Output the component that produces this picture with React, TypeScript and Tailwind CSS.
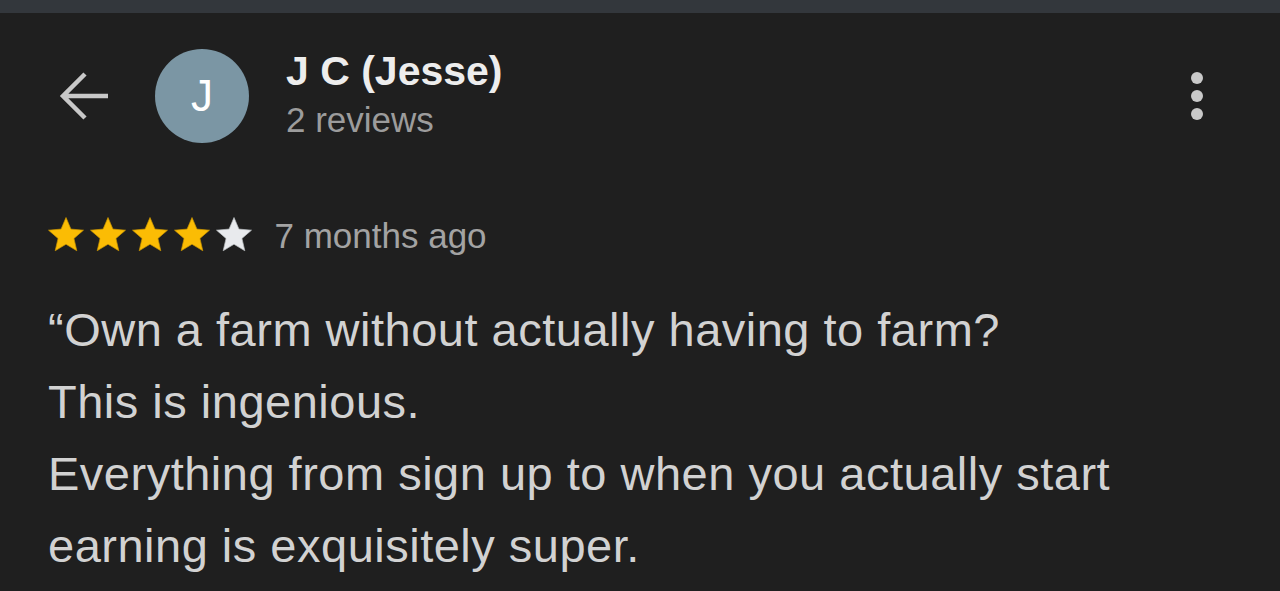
import React from 'react'

const STAR = 'M12 17.27L18.18 21l-1.64-7.03L22 9.24l-7.19-.61L12 2 9.19 8.63 2 9.24l5.46 4.73L5.82 21z'

function Star({ filled }: { filled: boolean }) {
  return (
    <svg width="42" height="42" viewBox="0 0 24 24" className="shrink-0">
      <path
        d={STAR}
        fill={filled ? '#fbbc04' : '#e8eaed'}
        stroke={filled ? '#c99400' : '#b8bbbf'}
        strokeWidth="0.4"
        strokeLinejoin="round"
      />
    </svg>
  )
}

export default function App() {
  const rating = 4
  const lines = [
    '\u201COwn a farm without actually having to farm?',
    'This is ingenious.',
    'Everything from sign up to when you actually start',
    'earning is exquisitely super.',
  ]

  return (
    <div
      className="w-[1280px] h-[591px] overflow-hidden bg-[#1f1f1f]"
      style={{ fontFamily: '"Liberation Sans", Arial, sans-serif' }}
    >
      <div className="h-[13px] bg-[#33373c]" />

      {/* header */}
      <div className="flex items-center pl-[58px] pr-[77px] pt-[36px]">
        <svg width="52" height="52" viewBox="0 0 52 52" className="shrink-0">
          <path
            d="M50 26H5M27 4L5 26l22 22"
            fill="none"
            stroke="#c8c8c8"
            strokeWidth="4.5"
            strokeLinecap="butt"
            strokeLinejoin="miter"
          />
        </svg>
        <div className="ml-[45px] w-[94px] h-[94px] rounded-full bg-[#7b96a4] flex items-center justify-center shrink-0">
          <span className="text-[44px] leading-none text-white">J</span>
        </div>
        <div className="ml-[37px] self-start mt-[2px] flex flex-col">
          <div className="text-[41px] leading-[41px] font-bold text-[#ededed]">J C (Jesse)</div>
          <div className="mt-[10px] text-[35px] leading-[35px] text-[#9c9c9c]">2 reviews</div>
        </div>
        <div className="ml-auto flex flex-col items-center gap-[6px]">
          <span className="w-[12px] h-[12px] rounded-full bg-[#c9c9c9]" />
          <span className="w-[12px] h-[12px] rounded-full bg-[#c9c9c9]" />
          <span className="w-[12px] h-[12px] rounded-full bg-[#c9c9c9]" />
        </div>
      </div>

      {/* rating row */}
      <div className="flex items-center pl-[44.5px] mt-[71px]">
        <div className="flex">
          {[1, 2, 3, 4, 5].map((i) => (
            <Star key={i} filled={i <= rating} />
          ))}
        </div>
        <span className="ml-[20px] text-[35px] leading-none text-[#a3a3a3]">7 months ago</span>
      </div>

      {/* review body */}
      <div className="pl-[48px] mt-[38px] text-[47px] leading-[72px] tracking-[0.5px] text-[#d2d2d2]">
        {lines.map((l) => (
          <div key={l}>{l}</div>
        ))}
      </div>
    </div>
  )
}
